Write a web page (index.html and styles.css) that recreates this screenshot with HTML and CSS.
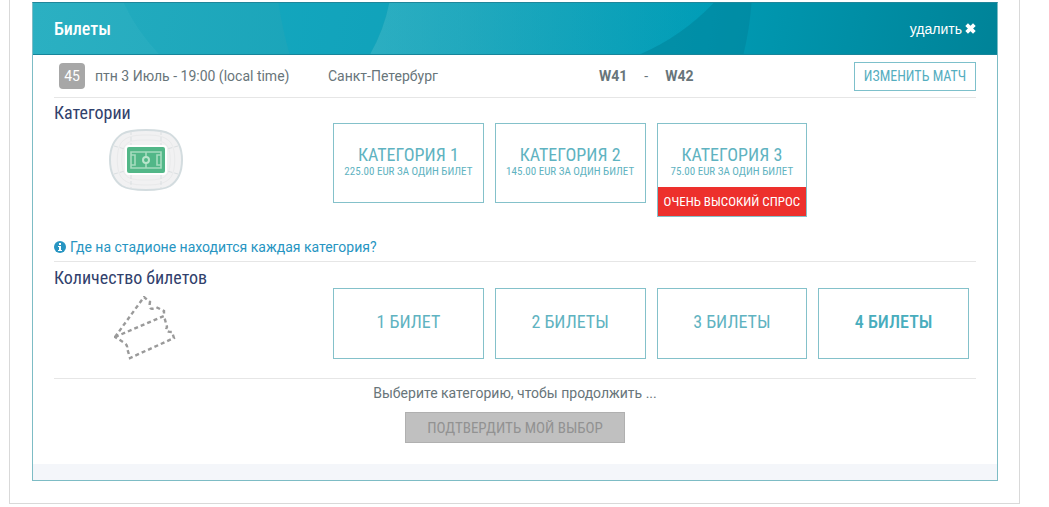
FILE: index.html
```html
<!DOCTYPE html>
<html lang="ru">
<head>
<meta charset="utf-8">
<meta name="viewport" content="width=device-width, initial-scale=1">
<title>Билеты</title>
<link rel="stylesheet" href="styles.css">
</head>
<body>
<main class="frame">
  <form class="card">
    <header class="card-header">
      <svg class="header-art" viewBox="0 0 966 52" preserveAspectRatio="none" aria-hidden="true">
        <path d="M0 0H91Q103 27 126 52H0Z" fill="#4fc0cf" fill-opacity=".16"/>
        <path d="M246 0H357Q351 27 338 52H257Q250 27 246 0Z" fill="#00a5c2" fill-opacity=".3"/>
        <path d="M357 0H682Q650 34 609 52H338Q352 27 357 0Z" fill="url(#sweep)"/>
        <path d="M682 0H720Q718 27 712 52H609Q650 34 682 0Z" fill="#00758c" fill-opacity=".3"/>
        <defs><linearGradient id="sweep"><stop offset="0" stop-color="#4fc3d2" stop-opacity=".35"/><stop offset="1" stop-color="#00a5c2" stop-opacity=".25"/></linearGradient></defs>
      </svg>
      <h1 class="card-title">Билеты</h1>
      <button class="remove" type="button">удалить
        <svg class="remove-icon" viewBox="0 0 10 10" aria-hidden="true"><path d="M1.500 1.500L8.500 8.500M8.500 1.500L1.500 8.500" stroke="currentColor" stroke-width="3.400"/></svg>
      </button>
    </header>

    <div class="card-body">
      <div class="match">
        <div class="match-date"><span class="match-number">45</span><span>птн 3 Июль - 19:00 (local time)</span></div>
        <span class="match-city">Санкт-Петербург</span>
        <div class="match-teams"><strong>W41</strong><span>-</span><strong>W42</strong></div>
        <button class="change" type="button">ИЗМЕНИТЬ МАТЧ</button>
      </div>

      <section class="section categories">
        <h2 class="section-title">Категории</h2>
        <div class="choices">
          <svg class="stadium" viewBox="0 0 74 62" aria-hidden="true">
            <path d="M37 1C49 1 56 2 61 5C70 11 73 20 73 31S70 51 61 57C56 60 49 61 37 61S18 60 13 57C4 51 1 42 1 31S4 11 13 5C18 2 25 1 37 1Z" fill="#f1f1f2" stroke="#d3dcdf" stroke-width="2"/>
            <path d="M37 6C51 6 57 8 62 14C67 21 67 41 62 48C57 54 51 56 37 56S17 54 12 48C7 41 7 21 12 14C17 8 23 6 37 6Z" fill="none" stroke="#e9eaeb"/>
            <path d="M37 11C50 11 55 12 59 18C62 24 62 38 59 44C55 50 50 51 37 51S19 50 15 44C12 38 12 24 15 18C19 12 24 11 37 11Z" fill="none" stroke="#eaebec"/>
            <path d="M22 2V16M52 2V16M22 46V60M52 46V60M5 17L16 20M69 17L58 20M5 45L16 42M69 45L58 42" fill="none" stroke="#dadfe1" stroke-dasharray="4 2"/>
            <rect x="16" y="16" width="42" height="30" rx="4" fill="#fff"/>
            <rect x="18" y="18" width="38" height="26" rx="2" fill="#52b788"/>
            <path d="M22 23H52V39H22ZM37 23V28M37 34V39M22 26H26V36H22M52 26H48V36H52" fill="none" stroke="#a5dcbf" stroke-width="1.6"/>
            <circle cx="37" cy="31" r="3" fill="none" stroke="#b9e5cc" stroke-width="2"/>
          </svg>
          <button class="choice choice-category" type="button"><span class="choice-name">КАТЕГОРИЯ 1</span><span class="choice-price">225.00 EUR ЗА ОДИН БИЛЕТ</span></button>
          <button class="choice choice-category" type="button"><span class="choice-name">КАТЕГОРИЯ 2</span><span class="choice-price">145.00 EUR ЗА ОДИН БИЛЕТ</span></button>
          <button class="choice choice-category" type="button"><span class="choice-name">КАТЕГОРИЯ 3</span><span class="choice-price">75.00 EUR ЗА ОДИН БИЛЕТ</span><span class="demand">ОЧЕНЬ ВЫСОКИЙ СПРОС</span></button>
        </div>
        <a class="help" href="#stadium">
          <svg class="help-icon" viewBox="0 0 12 12" aria-hidden="true"><circle cx="6" cy="6" r="6" fill="currentColor"/><path d="M5 2H7V4H5ZM4 5H7V9H8V10H4V9H5V6H4Z" fill="#fff"/></svg>
          Где на стадионе находится каждая категория?</a>
      </section>

      <section class="section quantity">
        <h2 class="section-title">Количество билетов</h2>
        <div class="choices">
          <svg class="tickets" viewBox="0 0 62 64" aria-hidden="true">
            <path d="M1 41L50 20L53 31Q50 36 58 36L60 42L16 62L13 52Q14 49 9 46ZM1 41L30 1L36 6Q34 16 42 11L50 15V20" fill="none" stroke="#9a9a9a" stroke-width="2.400" stroke-dasharray="4 3"/>
          </svg>
          <button class="choice choice-count" type="button">1 БИЛЕТ</button>
          <button class="choice choice-count" type="button">2 БИЛЕТЫ</button>
          <button class="choice choice-count" type="button">3 БИЛЕТЫ</button>
          <button class="choice choice-count choice-strong" type="button">4 БИЛЕТЫ</button>
        </div>
      </section>

      <div class="confirm">
        <p class="hint">Выберите категорию, чтобы продолжить ...</p>
        <button class="confirm-button" type="submit" disabled>ПОДТВЕРДИТЬ МОЙ ВЫБОР</button>
      </div>
    </div>
    <div class="card-footer"></div>
  </form>
</main>
</body>
</html>
```
FILE: styles.css
```css
* { box-sizing: border-box; }
body {
  margin: 0;
  background: #fff;
  color: #68757a;
  font: 14px/20px Roboto, "Liberation Sans", sans-serif;
}
button {
  margin: 0;
  border-radius: 0;
  font-family: "Roboto Condensed", Roboto, sans-serif;
  cursor: pointer;
}
h1, h2, p { margin: 0; }

.frame {
  margin: 0 29px 0 9px;
  padding: 2px 21px 22px 22px;
  border: 1px solid #d9d9d9;
  border-top: 0;
}
.card { border: 1px solid #7dbcc5; border-top-color: #20869a; }

.card-header {
  display: flex;
  align-items: center;
  justify-content: space-between;
  height: 52px;
  padding: 0 21px;
  position: relative;
  border-bottom: 1px solid #17859a;
  background: linear-gradient(100deg, #24adc0 0%, #16a0b6 45%, #009ab3 70%, #008398 100%);
  color: #fff;
}
.header-art { position: absolute; inset: 0; width: 100%; height: 100%; }
.card-title, .remove { position: relative; }
.card-title { font: 500 18px/20px "Roboto Condensed", Roboto, sans-serif; }
.remove {
  display: flex;
  align-items: center;
  gap: 3px;
  padding: 0;
  border: 0;
  background: none;
  color: #fff;
  font: 14px/20px "Liberation Sans", sans-serif;
}
.remove-icon { width: 11px; height: 11px; }

.card-body { padding: 0 21px; }
.match {
  display: grid;
  grid-template-columns: 274px 1fr 1fr 122px;
  align-items: center;
  height: 43px;
  border-bottom: 1px solid #e6e6e6;
}
.match-date { display: flex; align-items: center; gap: 10px; padding-left: 5px; }
.match-number {
  width: 26px;
  border-radius: 4px;
  background: #a7a7a7;
  color: #fff;
  line-height: 26px;
  text-align: center;
}
.match-teams { display: flex; gap: 17px; padding-left: 8px; }
.match-teams strong { font-weight: 700; }
.change {
  height: 29px;
  padding: 0;
  border: 1px solid #7dc0cb;
  background: #fff;
  color: #55aebf;
  font-size: 14px;
}

.section { border-bottom: 1px solid #e6e6e6; }
.section-title {
  padding-top: 5px;
  color: #31416c;
  font: 400 18px/20px "Roboto Condensed", Roboto, sans-serif;
}
.choices {
  display: grid;
  grid-template-columns: 268px repeat(4, 1fr);
  align-items: start;
  gap: 11px;
  padding-right: 7px;
}
.stadium { width: 74px; margin: 6px 0 0 55px; }
.tickets { width: 62px; margin: 8px 0 0 60px; }
.choice {
  display: flex;
  flex-direction: column;
  align-items: center;
  padding: 0;
  border: 1px solid #84c1ca;
  background: #fff;
  color: #5fb3c1;
  font-size: 18px;
  line-height: 20px;
  white-space: nowrap;
}
.choice-category { min-height: 80px; padding-top: 21px; }
.choice-price { font-size: 11px; line-height: 14px; }
.demand {
  align-self: stretch;
  margin-top: 8px;
  background: #ed302c;
  color: #fff;
  font-size: 13px;
  line-height: 29px;
}
.choice-count { height: 71px; padding-bottom: 3px; justify-content: center; }
.choice-strong { font-weight: 500; color: #48adbd; }
.help {
  display: flex;
  align-items: center;
  gap: 4px;
  width: fit-content;
  margin: 20px 0 4px;
  color: #2795c2;
  text-decoration: none;
}
.help-icon { width: 12px; height: 12px; }
.quantity { padding: 1px 0 18px; }

.confirm {
  display: flex;
  flex-direction: column;
  align-items: center;
  gap: 9px;
  padding: 4px 0 21px;
}
.confirm-button {
  width: 220px;
  height: 31px;
  padding: 0;
  border: 1px solid #b0b0b0;
  background: #c0c0c0;
  color: #929292;
  font-size: 15px;
}
.card-footer { height: 16px; background: #f4f6fa; }
```
